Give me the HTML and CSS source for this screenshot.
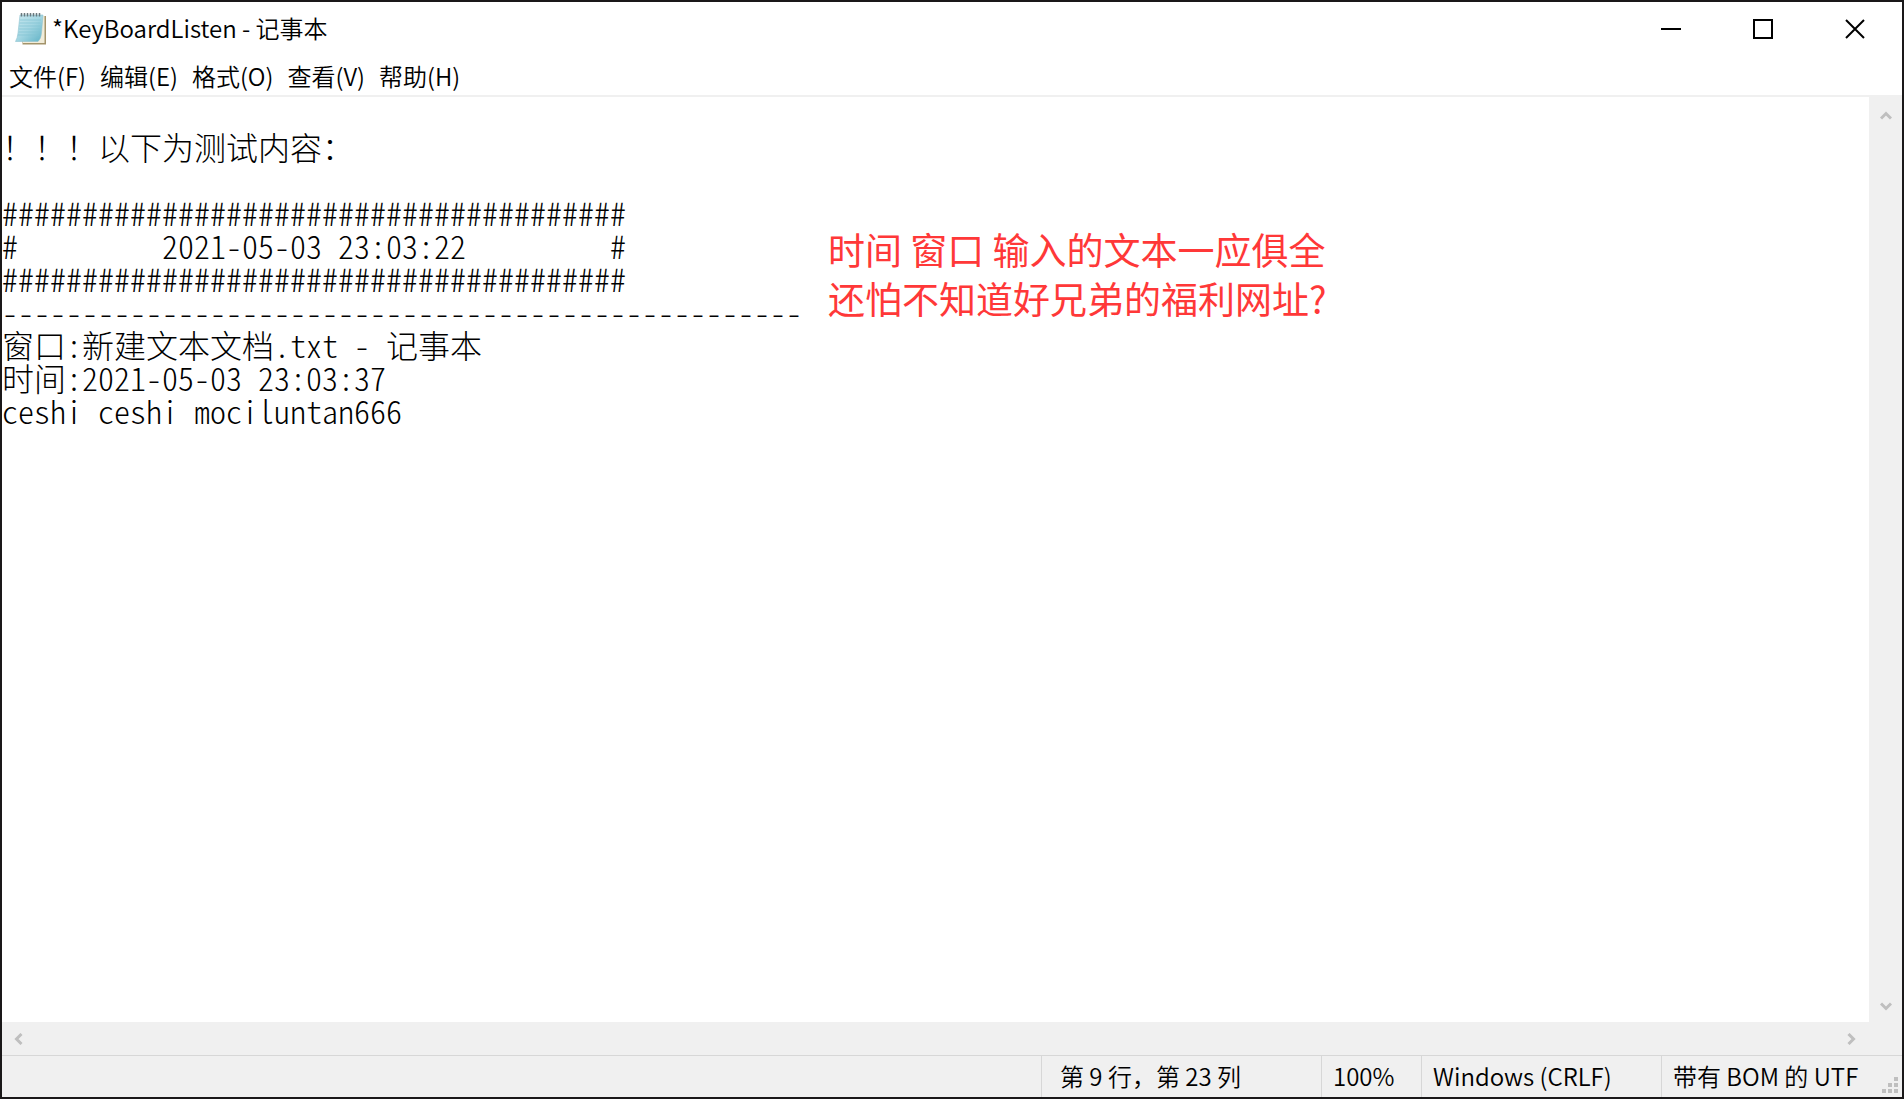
FILE: index.html
```html
<!DOCTYPE html>
<html lang="zh-CN">

<head>
  <meta charset="UTF-8" />
  <meta name="viewport" content="width=device-width, initial-scale=1" />
  <title>*KeyBoardListen - 记事本</title>
  <link rel="stylesheet" href="styles.css">
</head>

<body>
  <div class="window">
    <header class="titlebar">
      <svg class="app-icon" viewBox="0 0 34 34" aria-hidden="true">
        <defs>
          <linearGradient id="paper" x1="0" y1="0" x2="1" y2="1">
            <stop offset="0" stop-color="#c9e8ef" />
            <stop offset="0.5" stop-color="#a3d6e2" />
            <stop offset="1" stop-color="#5fb2c6" />
          </linearGradient>
        </defs>
        <path d="M8 4 H32 V32.500 H8.500 V29 L28 27 Z" fill="#a3936a" />
        <path d="M9 4 H30.500 V31 H9 Z" fill="#f1ecd9" />
        <path d="M6 3 H29 L27.500 21 Q27 27 24 29.500 H1.500 Q3.500 26 4 21 Z" fill="url(#paper)" stroke="#8fc3d0" stroke-width="0.600" />
        <path d="M6 8 H27 M5.500 11 H26.500 M5.300 14 H26.300 M5 17 H26 M4.700 20 H25.500 M4 23 H25" stroke="#83c3d2" stroke-width="0.700" />
        <path d="M7.500 1 V4.500 M10.500 1 V4.500 M13.500 1 V4.500 M16.500 1 V4.500 M19.500 1 V4.500 M22.500 1 V4.500 M25.500 1 V4.500" stroke="#69797e" stroke-width="1.500" />
      </svg>
      <h1 class="title">*KeyBoardListen - 记事本</h1>
      <div class="controls">
        <button type="button" aria-label="最小化"><svg viewBox="0 0 20 20"><path d="M0 10 H20" /></svg></button>
        <button type="button" aria-label="最大化"><svg viewBox="0 0 20 20"><path d="M1 1 H19 V19 H1 Z" /></svg></button>
        <button type="button" aria-label="关闭"><svg viewBox="0 0 20 20"><path d="M1 1 L19 19 M19 1 L1 19" /></svg></button>
      </div>
    </header>

    <nav class="menubar">
      <button type="button">文件(F)</button>
      <button type="button">编辑(E)</button>
      <button type="button">格式(O)</button>
      <button type="button">查看(V)</button>
      <button type="button">帮助(H)</button>
    </nav>

    <main class="workspace">
      <textarea class="editor" aria-label="文本编辑器" wrap="off" spellcheck="false">

！！！以下为测试内容：

#######################################
#         2021-05-03 23:03:22         #
#######################################
--------------------------------------------------
窗口:新建文本文档.txt - 记事本
时间:2021-05-03 23:03:37
ceshi ceshi mociluntan666</textarea>
      <div class="scroll-y">
        <button type="button" aria-label="向上滚动"><svg viewBox="0 0 12 12"><path d="M1 8.500 L6 3.500 L11 8.500" /></svg></button>
        <button type="button" aria-label="向下滚动"><svg viewBox="0 0 12 12"><path d="M1 3.500 L6 8.500 L11 3.500" /></svg></button>
      </div>
      <div class="scroll-x">
        <button type="button" aria-label="向左滚动"><svg viewBox="0 0 12 12"><path d="M8.500 1 L3.500 6 L8.500 11" /></svg></button>
        <button type="button" aria-label="向右滚动"><svg viewBox="0 0 12 12"><path d="M3.500 1 L8.500 6 L3.500 11" /></svg></button>
      </div>
      <p class="note">时间 窗口 输入的文本一应俱全<br>还怕不知道好兄弟的福利网址?</p>
    </main>

    <footer class="statusbar">
      <span class="cell cell-fill"></span>
      <span class="cell cell-position">第 9 行，第 23 列</span>
      <span class="cell cell-zoom">100%</span>
      <span class="cell cell-eol">Windows (CRLF)</span>
      <span class="cell cell-encoding">带有 BOM 的 UTF</span>
      <svg class="grip" viewBox="0 0 16 16" aria-hidden="true">
        <path d="M12 0h4v4h-4z M6 6h4v4h-4z M12 6h4v4h-4z M0 12h4v4h-4z M6 12h4v4h-4z M12 12h4v4h-4z" />
      </svg>
    </footer>
  </div>
</body>

</html>
```
FILE: styles.css
```css
* {
  margin: 0;
  padding: 0;
  box-sizing: border-box;
}

body {
  font-family: 'Noto Sans CJK SC', sans-serif;
  font-size: 24px;
  font-weight: 350;
  color: #000;
  background: #fff;
}

button {
  border: none;
  background: none;
  font: inherit;
  color: inherit;
}

svg {
  display: block;
}

.window {
  display: flex;
  flex-direction: column;
  height: 100vh;
  border: 2px solid #1a1819;
}

/* title bar */
.titlebar {
  display: flex;
  align-items: center;
  height: 54px;
  padding-left: 12px;
}

.app-icon {
  width: 34px;
  height: 34px;
}

.title {
  flex: 1;
  padding: 0 0 4px 4px;
  font-size: 24px;
  font-weight: 350;
}

.controls {
  display: flex;
  height: 100%;
  padding-right: 1px;
}

.controls button {
  display: flex;
  align-items: center;
  justify-content: center;
  width: 92px;
}

.controls svg {
  width: 20px;
  height: 20px;
  fill: none;
  stroke: #000;
  stroke-width: 2;
}

/* menu */
.menubar {
  display: flex;
  gap: 14px;
  height: 41px;
  padding-left: 7px;
  border-bottom: 2px solid #f0f0f0;
}

.menubar button {
  line-height: 39px;
}

/* editor with its scroll bars */
.workspace {
  position: relative;
  display: grid;
  grid-template-columns: 1fr 33px;
  grid-template-rows: 1fr 33px;
  flex: 1;
  min-height: 0;
  background: #f0f0f0;
}

.editor {
  width: 100%;
  height: 100%;
  border: none;
  outline: none;
  resize: none;
  overflow: hidden;
  background: #fff;
  color: #000;
  font-family: 'Noto Sans CJK SC', monospace;
  font-size: 32px;
  font-weight: 300;
  font-feature-settings: "hwid";
  line-height: 33px;
}

.scroll-y,
.scroll-x {
  display: flex;
  justify-content: space-between;
}

.scroll-y {
  flex-direction: column;
  padding-top: 2px;
}

.scroll-x {
  padding-right: 2px;
}

.scroll-y button,
.scroll-x button {
  display: flex;
  align-items: center;
  justify-content: center;
  width: 33px;
  height: 33px;
}

.scroll-y svg,
.scroll-x svg {
  width: 12px;
  height: 12px;
  fill: none;
  stroke: #bfbfbf;
  stroke-width: 3;
}

.note {
  position: absolute;
  top: 128px;
  left: 826px;
  color: #ff3838;
  font-size: 37px;
  font-weight: 400;
  line-height: 49px;
  white-space: nowrap;
}

/* status bar */
.statusbar {
  position: relative;
  display: flex;
  height: 42px;
  border-top: 1px solid #d7d7d7;
  background: #f0f0f0;
  line-height: 40px;
  white-space: nowrap;
}

.cell {
  padding-left: 11px;
  border-left: 1px solid #d7d7d7;
}

.cell-fill {
  flex: 1;
  border-left: none;
}

.cell-position {
  width: 280px;
  padding-left: 18px;
}

.cell-zoom {
  width: 100px;
}

.cell-eol {
  width: 240px;
}

.cell-encoding {
  width: 241px;
}

.grip {
  position: absolute;
  right: 4px;
  bottom: 4px;
  width: 16px;
  height: 16px;
  fill: #bfbfbf;
}
```
